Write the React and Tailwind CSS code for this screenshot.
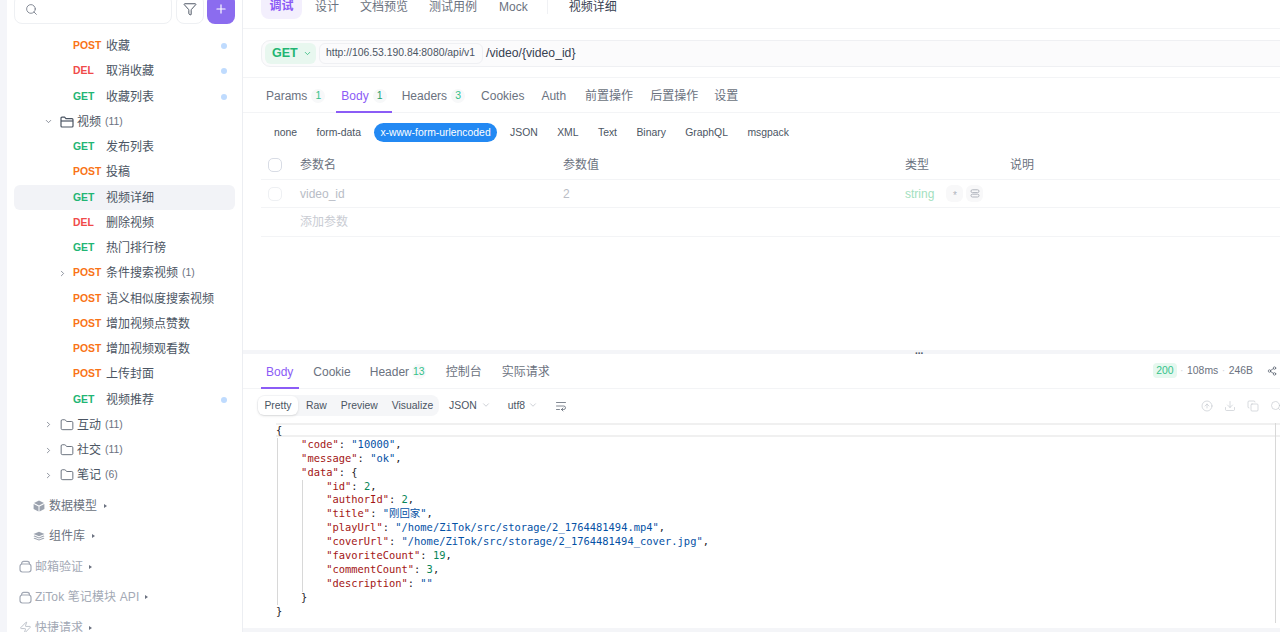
import React from 'react';
import { Search, Funnel, Plus, ChevronDown, ChevronRight, Folder, Zap, Share2, Download, Copy, WrapText, CircleArrowUp } from 'lucide-react';

const M = { POST: 'text-[#f97316]', DEL: 'text-[#f04a4a]', GET: 'text-[#22b573]' };
const CJK = 'font-["Liberation_Sans","Noto_Sans_CJK_SC",sans-serif]';

function Api({ m, name, dot, active, arrow, count }) {
  return (
    <div className={`flex h-[25.25px] items-center rounded-md pr-[8px] ${active ? 'bg-[#f2f3f7]' : ''}`}>
      <div className="flex w-[59px] shrink-0 justify-end pr-[6px] text-[#6b7280]">
        {arrow && <ChevronRight size={9} strokeWidth={2} />}
      </div>
      <span className={`w-[33px] shrink-0 text-[10.4px] font-bold ${M[m]}`}>{m}</span>
      <span className="text-[12px] text-[#4b5563]">{name}</span>
      {count && <span className="ml-[4px] text-[10.4px] text-[#6b7280]">{count}</span>}
      {dot && <span className="ml-auto h-[6px] w-[6px] rounded-full bg-[#bfdbfe]" />}
    </div>
  );
}

function OpenFolder() {
  return (
    <svg width="14" height="14" viewBox="0 0 14 14" fill="none" stroke="#4b5563" strokeWidth="1.2" strokeLinejoin="round">
      <path d="M1 11V3.2c0-.6.4-1 1-1h2.6l1.3 1.5H12c.6 0 1 .4 1 1V11c0 .6-.4 1-1 1H2c-.6 0-1-.4-1-1Z" />
      <path d="M1 6h12" />
    </svg>
  );
}

function Dir({ name, count, open }) {
  return (
    <div className="flex h-[25.25px] items-center">
      <div className="flex w-[46px] shrink-0 justify-end pr-[7px] text-[#6b7280]">
        {open ? <ChevronDown size={9} strokeWidth={2} /> : <ChevronRight size={9} strokeWidth={2} />}
      </div>
      {open ? <OpenFolder /> : <Folder size={14} strokeWidth={1.4} className="text-[#4b5563]" />}
      <span className="ml-[3px] text-[12px] text-[#4b5563]">{name}</span>
      <span className="ml-[4px] text-[10.4px] text-[#6b7280]">{count}</span>
    </div>
  );
}

function Caret() {
  return <span className="ml-[3px] h-0 w-0 border-y-[2.5px] border-l-[3px] border-y-transparent border-l-[#6b7280]" />;
}

function Cube() {
  return (
    <svg width="12" height="12" viewBox="0 0 12 12" fill="#9ca3af">
      <path d="M6 .4 11 3 6 5.5 1 3Z" />
      <path d="M.6 3.9 5.5 6.4v5.2L.6 9Z" />
      <path d="M11.4 3.9 6.5 6.4v5.2L11.4 9Z" />
    </svg>
  );
}

function Stack() {
  return (
    <svg width="12" height="12" viewBox="0 0 12 12" fill="#9ca3af">
      <path d="M6 1.8 11.5 4 6 6.2.5 4Z" />
      <path d="M1.6 5.6 6 7.4l4.4-1.8 1.1.6L6 8.4.5 6.2Z" />
      <path d="M1.6 7.8 6 9.6l4.4-1.8 1.1.6L6 10.6.5 8.4Z" />
    </svg>
  );
}

function Jar() {
  return (
    <svg width="13" height="13" viewBox="0 0 13 13" fill="none" stroke="#a3a9b5" strokeWidth="1.2">
      <rect x="1" y="4" width="11" height="8" rx="2.4" />
      <path d="M2.5 4c0-1.6 1-2.6 2.2-2.6h3.6c1.2 0 2.2 1 2.2 2.6" />
    </svg>
  );
}

function Sidebar() {
  return (
    <aside className="flex w-[236px] shrink-0 flex-col overflow-hidden border-r border-[#eceef2] bg-white">
      <div className="mt-[-6px] flex h-[30px] shrink-0 pl-[7px]">
        <div className="flex w-[158px] items-center rounded-lg border border-[#eef0f3] pl-[10px]">
          <Search size={13} strokeWidth={1.5} className="text-[#6b7280]" />
        </div>
        <div className="ml-[4px] flex w-[28px] items-center justify-center rounded-lg border border-[#eef0f3]">
          <Funnel size={14} strokeWidth={1.5} className="text-[#374151]" />
        </div>
        <div className="ml-[3px] flex w-[28px] items-center justify-center rounded-lg bg-[#8b6cef]">
          <Plus size={14} strokeWidth={2} className="text-white" />
        </div>
      </div>
      <div className="mt-[9.4px] flex flex-col px-[7px]">
        <Api m="POST" name="收藏" dot />
        <Api m="DEL" name="取消收藏" dot />
        <Api m="GET" name="收藏列表" dot />
        <Dir name="视频" count="(11)" open />
        <Api m="GET" name="发布列表" />
        <Api m="POST" name="投稿" />
        <Api m="GET" name="视频详细" active />
        <Api m="DEL" name="删除视频" />
        <Api m="GET" name="热门排行榜" />
        <Api m="POST" name="条件搜索视频" arrow count="(1)" />
        <Api m="POST" name="语义相似度搜索视频" />
        <Api m="POST" name="增加视频点赞数" />
        <Api m="POST" name="增加视频观看数" />
        <Api m="POST" name="上传封面" />
        <Api m="GET" name="视频推荐" dot />
        <Dir name="互动" count="(11)" />
        <Dir name="社交" count="(11)" />
        <Dir name="笔记" count="(6)" />
      </div>
      <div className="mt-[3px] flex flex-col text-[12px]">
        <div className="flex h-[30.4px] items-center gap-[4px] pl-[26px] text-[#6b7280]"><Cube />数据模型<Caret /></div>
        <div className="flex h-[30.4px] items-center gap-[4px] pl-[26px] text-[#6b7280]"><Stack />组件库<Caret /></div>
        <div className="flex h-[30.4px] items-center gap-[3px] pl-[12px] text-[#a3a9b5]"><Jar />邮箱验证<Caret /></div>
        <div className="flex h-[30.4px] items-center gap-[3px] pl-[12px] text-[#a3a9b5]"><Jar /><span className="tracking-[0.12px]">ZiTok 笔记模块 API</span><Caret /></div>
        <div className="flex h-[30.4px] items-center gap-[3px] pl-[12px] text-[#a3a9b5]"><Zap size={13} strokeWidth={1.3} />快捷请求<Caret /></div>
      </div>
    </aside>
  );
}

function Badge({ children, dark }) {
  return (
    <span className={`ml-[4px] flex h-[14px] min-w-[14px] items-center justify-center rounded-full bg-[#f7f8f9] px-[2px] text-[10.4px] ${dark ? 'text-[#22a06b]' : 'text-[#34c28a]'}`}>
      {children}
    </span>
  );
}

function TopBar() {
  return (
    <div className="flex h-[29px] shrink-0 items-start border-b border-[#f3f4f6] pl-[18px] text-[12px] text-[#6b7280]">
      <span className="mt-[-7px] flex h-[26px] w-[41px] items-center justify-center rounded-lg bg-[#f3effd] font-bold text-[#8b5cf6]">调试</span>
      <div className="flex h-[14px] items-center">
        <span className="ml-[13px]">设计</span>
        <span className="ml-[21px]">文档预览</span>
        <span className="ml-[21px]">测试用例</span>
        <span className="ml-[22px]">Mock</span>
        <span className="ml-[19px] h-[14px] w-px bg-[#f0f1f4]" />
        <span className="ml-[21px] text-[#374151]">视频详细</span>
      </div>
    </div>
  );
}

function UrlBar() {
  return (
    <div className="flex h-[49px] shrink-0 items-center border-b border-[#f3f4f6] pl-[18px]">
      <div className="mr-[-20px] flex h-[27px] flex-1 items-center rounded-l-[9px] border border-[#eff0f3] bg-[#fbfbfc] pl-[3px]">
        <div className="flex h-[21px] w-[51px] items-center gap-[5px] rounded-md bg-[#e8f7ef] pl-[7px] text-[12.5px] font-bold text-[#22b573]">
          GET<ChevronDown size={9} strokeWidth={2} />
        </div>
        <div className="ml-[3px] flex h-[21px] w-[164px] items-center rounded-md border border-[#eff0f3] bg-[#fbfbfc] pl-[6px] text-[10.4px] text-[#4b5563]">
          http://106.53.190.84:8080/api/v1
        </div>
        <span className="ml-[3px] text-[12.2px] text-[#374151]">/video/{'{video_id}'}</span>
      </div>
    </div>
  );
}

function Tab({ children, active, className = '' }) {
  return (
    <div className={`relative flex h-full items-center pt-[1px] ${active ? 'text-[#8b5cf6]' : 'text-[#6b7280]'} ${className}`}>
      {children}
      {active && <span className="absolute bottom-[-1px] left-[-5.5px] right-[-5.5px] h-[2px] bg-[#8b5cf6]" />}
    </div>
  );
}

function ReqTabs() {
  return (
    <div className="flex h-[35px] shrink-0 items-center border-b border-[#f3f4f6] pl-[23px] text-[12px]">
      <Tab>Params<Badge>1</Badge></Tab>
      <Tab active className="ml-[16px]">Body<Badge dark>1</Badge></Tab>
      <Tab className="ml-[15px]">Headers<Badge>3</Badge></Tab>
      <Tab className="ml-[16px]">Cookies</Tab>
      <Tab className="ml-[17px]">Auth</Tab>
      <Tab className="ml-[19px]">前置操作</Tab>
      <Tab className="ml-[17px]">后置操作</Tab>
      <Tab className="ml-[16px]">设置</Tab>
    </div>
  );
}

function BodyTypes() {
  const items = ['none', 'form-data', 'x-www-form-urlencoded', 'JSON', 'XML', 'Text', 'Binary', 'GraphQL', 'msgpack'];
  return (
    <div className="flex h-[38px] shrink-0 items-center pl-[25px] pt-[1px] text-[10.4px] text-[#4b5563]">
      {items.map((t) => (
        <span key={t} className={`mr-[7.4px] flex h-[19px] items-center rounded-full px-[6px] ${t.startsWith('x-') ? 'bg-[#2389f3] text-white' : ''}`}>{t}</span>
      ))}
    </div>
  );
}

function ParamCols({ a, b, c, d, className = '' }) {
  return (
    <div className={`grid grid-cols-[39px_263px_342px_105px_1fr] items-center border-b border-[#f3f4f6] ${className}`}>
      {a}<div>{b}</div><div>{c}</div><div>{d}</div><div />
    </div>
  );
}

function ParamTable() {
  return (
    <div className="ml-[18px] text-[12px]">
      <div className="grid h-[29px] grid-cols-[39px_263px_342px_105px_1fr] items-center border-b border-[#f3f4f6] text-[#6b7280]">
        <span className="ml-[7px] h-[14px] w-[14px] rounded-[5px] border border-[#d8dce5]" />
        <div>参数名</div><div>参数值</div><div>类型</div><div>说明</div>
      </div>
      <ParamCols
        className="h-[28px] text-[#b9bdc6]"
        a={<span className="ml-[7px] h-[14px] w-[14px] rounded-[5px] border border-[#eef0f3]" />}
        b="video_id"
        c="2"
        d={
          <span className="flex items-center gap-[3px]">
            <span className="mr-[9px] text-[#a3dfc0]">string</span>
            <span className="flex h-[17px] w-[17px] items-center justify-center rounded-md bg-[#f8f8f9] pt-[4px] text-[10px] leading-none text-[#b0b4bd]">*</span>
            <span className="flex h-[17px] w-[17px] items-center justify-center rounded-md bg-[#f8f8f9]">
              <svg width="10" height="9" viewBox="0 0 10 9" fill="none" stroke="#b0b4bd" strokeWidth="1">
                <rect x="1" y=".8" width="8" height="2.8" rx="1.4" />
                <rect x="1" y="5.2" width="8" height="2.8" rx="1.4" />
              </svg>
            </span>
          </span>
        }
      />
      <ParamCols className="h-[29px] text-[#c9ccd3]" a={<span />} b="添加参数" />
    </div>
  );
}

function Divider() {
  return (
    <div className="relative h-[4px] shrink-0 bg-[#f4f5f8]">
      <span className="absolute left-[672px] top-[-3px] text-[10px] font-bold leading-[8px] text-[#4b5563]">...</span>
    </div>
  );
}

function RespTabs() {
  return (
    <div className="flex h-[35px] shrink-0 items-center border-b border-[#f3f4f6] pl-[23px] pr-[3px] text-[12px]">
      <Tab active>Body</Tab>
      <Tab className="ml-[20px]">Cookie</Tab>
      <Tab className="ml-[19px]">Header<span className="ml-[3px] rounded-full bg-[#f7f8f9] px-[1px] text-[10.4px] text-[#34c28a]">13</span></Tab>
      <Tab className="ml-[20px]">控制台</Tab>
      <Tab className="ml-[20px]">实际请求</Tab>
      <div className="ml-auto flex items-center text-[10.4px] text-[#6b7280]">
        <span className="flex h-[15px] items-center rounded bg-[#e6f8ef] px-[3px] text-[#34c28a]">200</span>
        <span className="mx-[3.5px] text-[#d1d5db]">·</span>108ms
        <span className="mx-[3.5px] text-[#d1d5db]">·</span>246B
        <Share2 size={10} strokeWidth={1.6} className="ml-[14px] text-[#4b5563]" />
      </div>
    </div>
  );
}

function RespTools() {
  return (
    <div className="flex h-[33px] shrink-0 items-center pl-[14px] text-[10.4px] text-[#4b5563]">
      <div className="flex h-[21px] w-[182px] items-center rounded-lg bg-[#f5f6f8] px-[1px]">
        <span className="flex h-[19px] w-[40px] items-center justify-center rounded-md bg-white shadow-sm">Pretty</span>
        <span className="ml-[8px]">Raw</span>
        <span className="ml-[14px]">Preview</span>
        <span className="ml-[14px]">Visualize</span>
      </div>
      <span className="ml-[10px] flex items-center gap-[4px]">JSON<ChevronDown size={10} strokeWidth={1.2} className="text-[#9ca3af]" /></span>
      <span className="ml-[17px] flex items-center gap-[3px]">utf8<ChevronDown size={10} strokeWidth={1.2} className="text-[#9ca3af]" /></span>
      <WrapText size={12} strokeWidth={1.4} className="ml-[17px] text-[#4b5563]" />
      <div className="ml-auto mr-[-2px] flex items-center gap-[11px] text-[#c3c7ce]">
        <CircleArrowUp size={12} strokeWidth={1.3} />
        <Download size={12} strokeWidth={1.3} />
        <Copy size={12} strokeWidth={1.3} />
        <Search size={12} strokeWidth={1.3} />
      </div>
    </div>
  );
}

const K = ({ children }) => <span className="text-[#a31515]">{children}</span>;
const S = ({ children }) => <span className="text-[#0451a5]">{children}</span>;
const N = ({ children }) => <span className="text-[#098658]">{children}</span>;

function Line({ children, indent = 0 }) {
  return (
    <div className="h-[13.9px] whitespace-pre">
      {' '.repeat(indent)}{children}
    </div>
  );
}

function Code() {
  return (
    <div className="relative min-h-0 flex-1 overflow-hidden pl-[33px] font-['DejaVu_Sans_Mono','Noto_Sans_CJK_SC',monospace] text-[10.43px] leading-[13.9px] text-[#1f2328]">
      <div className="absolute left-[33px] right-0 top-[1px] h-[14px] border-y-2 border-[#f0f0f0]" />
      <div className="absolute left-[33.5px] top-[16px] h-[167px] w-px bg-[#d8d8d8]" />
      <div className="absolute left-[58.5px] top-[58px] h-[112px] w-px bg-[#d8d8d8]" />
      <div className="absolute left-[1032px] top-[1px] h-[200px] w-px bg-[#d8d8d8]" />
      <div className="relative pt-[2px]">
        <Line>{'{'}</Line>
        <Line indent={4}><K>"code"</K>: <S>"10000"</S>,</Line>
        <Line indent={4}><K>"message"</K>: <S>"ok"</S>,</Line>
        <Line indent={4}><K>"data"</K>: {'{'}</Line>
        <Line indent={8}><K>"id"</K>: <N>2</N>,</Line>
        <Line indent={8}><K>"authorId"</K>: <N>2</N>,</Line>
        <Line indent={8}><K>"title"</K>: <S>"刚回家"</S>,</Line>
        <Line indent={8}><K>"playUrl"</K>: <S>"/home/ZiTok/src/storage/2_1764481494.mp4"</S>,</Line>
        <Line indent={8}><K>"coverUrl"</K>: <S>"/home/ZiTok/src/storage/2_1764481494_cover.jpg"</S>,</Line>
        <Line indent={8}><K>"favoriteCount"</K>: <N>19</N>,</Line>
        <Line indent={8}><K>"commentCount"</K>: <N>3</N>,</Line>
        <Line indent={8}><K>"description"</K>: <S>""</S></Line>
        <Line indent={4}>{'}'}</Line>
        <Line>{'}'}</Line>
      </div>
    </div>
  );
}

export default function App() {
  return (
    <div className={`flex h-[632px] w-[1280px] overflow-hidden bg-[#f4f5f9] pl-[7px] ${CJK}`}>
      <Sidebar />
      <main className="flex min-w-0 flex-1 flex-col bg-white">
        <div className="flex h-[350px] shrink-0 flex-col">
          <TopBar />
          <UrlBar />
          <ReqTabs />
          <BodyTypes />
          <ParamTable />
        </div>
        <Divider />
        <RespTabs />
        <RespTools />
        <Code />
        <div className="h-[4px] shrink-0 bg-[#f4f5f8]" />
      </main>
    </div>
  );
}
